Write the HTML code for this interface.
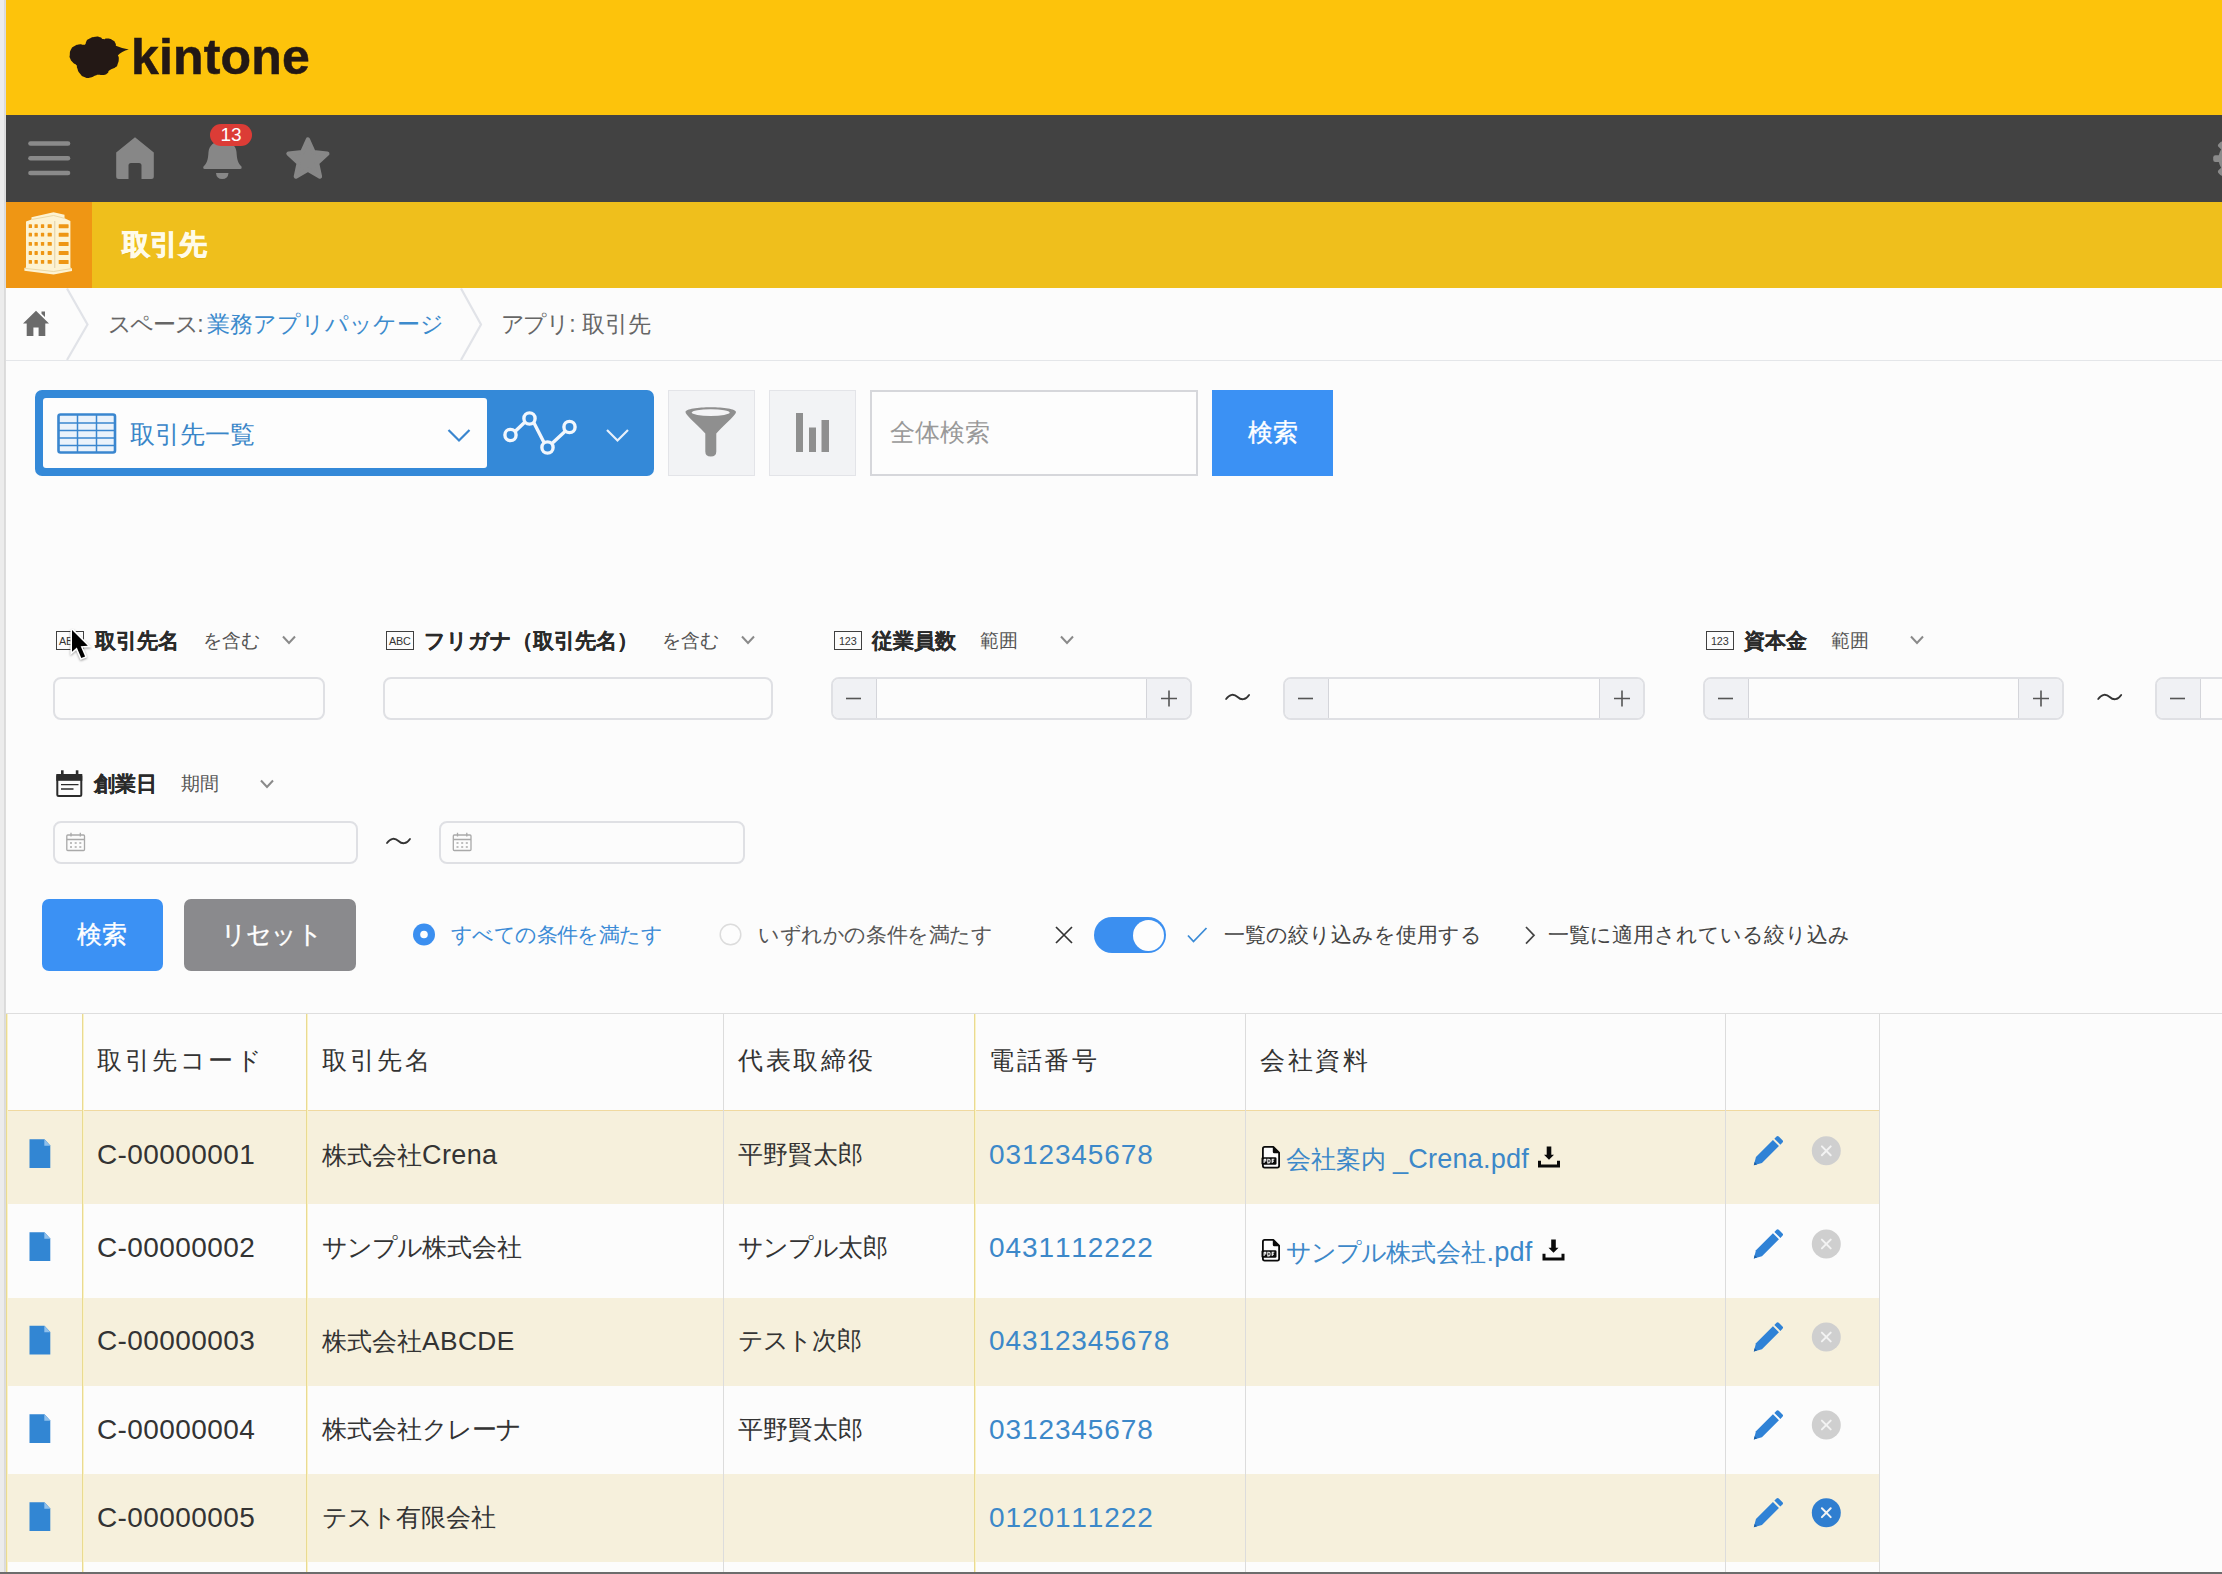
<!DOCTYPE html>
<html lang="ja">
<head>
<meta charset="utf-8">
<title>取引先 - kintone</title>
<style>
*{box-sizing:border-box;margin:0;padding:0}
html,body{width:2222px;height:1574px;overflow:hidden;background:#fcfcfc}
body{position:relative;font-family:"Liberation Sans",sans-serif;color:#333;font-size:28px}
.abs{position:absolute}
.t{position:absolute;white-space:nowrap;line-height:1}
/* window edge */
#edge{left:0;top:0;width:6px;height:1574px;background:linear-gradient(90deg,#ececec 0,#ececec 4px,#d9d9d9 4px,#dedede 6px)}
#hdr{left:6px;top:0;width:2216px;height:115px;background:#fdc30b}
#nav{left:6px;top:115px;width:2216px;height:87px;background:#424242}
#appbar{left:6px;top:202px;width:2216px;height:86px;background:#efbf1c}
#appicon{left:6px;top:202px;width:86px;height:86px;background:#ef9614}
#crumb{left:6px;top:288px;width:2216px;height:73px;background:#fcfcfc;border-bottom:1px solid #e4e6e9}
#bottomline{left:0;top:1572px;width:2222px;height:2px;background:#6c6c6c}

#logo{left:60px;top:25px}
#logotxt{left:131px;top:27.300px;font-size:50px;font-weight:bold;color:#231815;letter-spacing:0.150px;line-height:60px;-webkit-text-stroke:.55px #231815}
.navic{fill:#878787}
#badge{left:210px;top:124px;width:42px;height:22px;border-radius:11px;background:#dc3c36;color:#fff;font-size:19px;line-height:22px;text-align:center}
#apptitle{left:122px;top:228.500px;font-size:28px;font-weight:bold;color:#fffbe9;line-height:32px;letter-spacing:.3px;-webkit-text-stroke:.9px #fffbe9;text-shadow:0 1px 1px rgba(150,110,0,.2)}
.crumbtxt{top:310px;font-size:23px;line-height:28px;color:#666}
.crumbtxt a{color:#3d8bcd;text-decoration:none}

#viewsel{left:35px;top:390px;width:619px;height:86px;border-radius:7px;background:#3489d8}
#viewinner{left:43px;top:398px;width:444px;height:70px;border-radius:3px;background:#fdfdfd}
#viewtxt{left:130px;top:418px;font-size:25px;line-height:32px;color:#3a86c8}
.tbtn{top:390px;width:87px;height:86px;background:#f2f3f5;border:1px solid #e3e4e8}
#gsearch{left:870px;top:390px;width:328px;height:86px;background:#fdfdfd;border:2px solid #d6d7db}
#gsearchtxt{left:890px;top:417px;font-size:24.8px;line-height:32px;color:#999}
#gbtn{left:1212px;top:390px;width:121px;height:86px;background:#3b91f4}
#gbtntxt{left:1248px;top:417px;font-size:24.6px;line-height:32px;color:#fff;-webkit-text-stroke:.35px #fff}

.inp{background:#fcfcfc;border:2px solid #dfe0e4;border-radius:8px;height:43px}
.lbl{font-size:21.2px;font-weight:bold;color:#2a2a2a;line-height:28px;-webkit-text-stroke:.15px #2a2a2a}
.op{font-size:19.4px;color:#555;line-height:28px}
.num{background:#fcfcfc;border:2px solid #dfe0e4;border-radius:8px;height:43px;overflow:hidden}
.num i{position:absolute;top:0;height:39px;width:44px;background:#f0f1f4;display:block}
.num i.m{left:0;border-right:1.500px solid #d4d5da}
.num i.p{right:0;border-left:1.500px solid #d4d5da}
.tilde{font-size:26px;color:#333;line-height:28px}
.ficon{position:absolute;border:1.700px solid #404040;width:27.500px;height:19px;font-size:10.800px;line-height:18.400px;text-align:center;color:#333;letter-spacing:-.2px;font-family:"Liberation Sans",sans-serif}

.btn{top:899px;height:72px;border-radius:7px}
.btntxt{top:918px;font-size:25px;line-height:32px;color:#fff;-webkit-text-stroke:.35px #fff}
.atxt{top:921px;font-size:21.3px;line-height:28px;color:#444}
#toggle{left:1094px;top:917px;width:72px;height:36px;border-radius:18px;background:#3b8ff0}
#knob{left:1133px;top:919.500px;width:31px;height:31px;border-radius:50%;background:#fdfdfd}
/* table */
#ttop{left:6px;top:1013px;width:2216px;height:1.300px;background:#dedede}
.row{left:6px;width:1873px}
.cream{background:#f6f0dc}
.vl{top:1014px;width:1.200px;height:558px}
.vy{width:2px !important;background:linear-gradient(90deg,#e9da92 0,#e9da92 1px,#fbf3c6 1px,#fbf3c6 2px)}
.vg{background:#dcdcdc}
.th{top:1045px;font-size:24.6px;letter-spacing:2.500px;line-height:32px;color:#333}
.td{font-size:24.8px;line-height:32px;color:#333}
.td i{font-style:normal;letter-spacing:-.9px}
.td b.f{font-size:27.100px;letter-spacing:.2px}
.td b,.lat{font-weight:normal;font-size:28px;letter-spacing:.4px;font-kerning:none;font-family:"Liberation Sans",sans-serif}
.lnk{color:#3c88c9}
</style>
</head>
<body>
<div id="edge" class="abs"></div>
<div id="hdr" class="abs"></div>
<div id="nav" class="abs"></div>
<div id="appbar" class="abs"></div>
<div id="appicon" class="abs"></div>
<div id="crumb" class="abs"></div>

<!-- header logo -->
<svg id="logo" class="abs" width="80" height="60" viewBox="60 25 80 60">
 <path fill="#231815" d="M69.8 54.7 C70.1 51.6 69.5 52.2 71.1 49.3 C72.7 46.4 71.9 47.5 74.6 45.9 C77.3 44.3 76.2 44.8 79.1 44.4 C82.0 44.0 81.2 44.9 83.3 44.8 C85.4 44.7 84.4 45.2 85.4 44.0 C86.4 42.8 85.3 42.9 86.4 41.3 C87.5 39.7 85.8 40.6 88.7 39.1 C91.6 37.6 91.4 37.4 95.2 36.8 C99.0 36.2 97.4 36.5 100.1 37.3 C102.8 38.1 100.7 38.7 103.2 39.1 C105.7 39.5 104.5 38.1 107.7 38.5 C110.9 38.9 110.1 38.6 112.7 40.2 C115.3 41.8 114.3 41.2 115.4 43.2 C116.5 45.2 115.4 43.9 116.1 46.3 C116.8 48.7 117.0 47.7 117.6 50.5 C118.2 53.3 117.4 52.0 117.8 54.7 C118.2 57.4 118.9 55.3 118.8 58.5 C118.7 61.7 118.7 61.3 117.6 64.2 C116.5 67.1 118.1 65.3 115.4 67.3 C112.7 69.3 112.2 68.4 109.6 70.3 C107.0 72.2 109.6 71.5 107.7 73.0 C105.8 74.5 107.1 74.3 103.9 74.9 C100.7 75.5 101.0 74.5 98.2 74.7 C95.4 74.9 98.0 74.7 95.5 75.6 C93.0 76.5 94.1 77.0 90.6 77.5 C87.1 78.0 88.5 78.6 84.9 77.2 C81.3 75.8 82.5 76.5 79.9 73.4 C77.3 70.3 78.3 70.7 77.2 68.0 C76.1 65.3 78.0 67.2 76.5 65.3 C75.0 63.4 74.8 64.6 72.7 62.3 C70.6 60.0 71.2 61.0 70.2 58.5 C69.2 56.0 69.5 57.8 69.8 54.7 Z"/>
 <path fill="#231815" d="M115.800 45.800 Q122 48.500 128.800 49.500 Q121.500 51.200 117.300 56 Z"/>
</svg>
<div id="logotxt" class="t">kintone</div>
<!-- nav icons -->
<svg class="abs" style="left:20px;top:130px" width="330" height="60" viewBox="20 130 330 60">
 <g fill="none" stroke="#8a8a8a" stroke-width="4.6" stroke-linecap="round">
  <path d="M30.5 143.5H68"/><path d="M30.5 158.2H68"/><path d="M30.5 173H68"/>
 </g>
 <path class="navic" d="M135 137.2 L153.8 152.5 V176.5 Q153.8 179 151.3 179 H141.5 V165.5 Q141.5 163 139 163 H131 Q128.5 163 128.5 165.5 V179 H118.7 Q116.2 179 116.2 176.5 V152.5 Z"/>
 <path class="navic" d="M222 141 C213.500 141 209 146 208.500 152 C208 160 207 163 203.500 166.500 Q202.600 168.600 204.600 169 H240.400 Q242.400 168.600 241.500 166.500 C238 163 237 160 236.500 152 C236 146 231.500 141 222 141 Z"/>
 <path class="navic" d="M216 173 H228.500 Q228 179 222.200 179 Q216.500 179 216 173 Z"/>
 <path class="navic" d="M307.9 139.6 L313.5 152.2 L327.3 153.7 L317.0 163.0 L319.9 176.5 L307.9 169.6 L295.9 176.5 L298.8 163.0 L288.5 153.7 L302.3 152.2 Z" stroke="#878787" stroke-width="4.400" stroke-linejoin="round"/>
</svg>
<div id="badge" class="abs">13</div>
<svg class="abs" style="left:2202px;top:130px" width="20" height="60" viewBox="2202 130 20 60">
 <g fill="#8a8a8a"><circle cx="2235.500" cy="158.600" r="17"/>
 <rect x="2213.200" y="155.200" width="9" height="6.800" rx="2.200"/>
 <rect x="2213.200" y="155.200" width="9" height="6.800" rx="2.200" transform="rotate(44 2235.500 158.600)"/>
 <rect x="2213.200" y="155.200" width="9" height="6.800" rx="2.200" transform="rotate(-44 2235.500 158.600)"/></g>
</svg>
<!-- app icon (building) -->
<svg class="abs" style="left:20px;top:208px" width="60" height="72" viewBox="20 208 60 72">
 <path fill="#fdf3d2" d="M26 221.500 L31.500 219.500 V217.200 L53.500 212.300 L64.500 214.800 V218.300 L70.400 221 V267.500 L72 268.500 V271 L53.600 274.400 L24.400 270.800 V268.300 L26 267.500 Z"/>
 <path d="M31.500 219.500 L53.600 215.500 L64.500 218.300 M24.400 268.300 L53.600 271.500 L72 268.500" fill="none" stroke="#ecd9a6" stroke-width="1"/>
 <rect x="54.200" y="221" width="1.100" height="47" fill="#e3d3ad"/>
 <g fill="#ee9614"><rect x="28.7" y="224.2" width="3.3" height="3.800" rx=".6"/><rect x="34.5" y="224.2" width="3.3" height="3.800" rx=".6"/><rect x="40.9" y="224.2" width="3.3" height="3.800" rx=".6"/><rect x="47.6" y="224.2" width="4.2" height="3.800" rx=".6"/><rect x="58.700" y="224.2" width="9.900" height="4" rx=".6"/><rect x="28.7" y="232.8" width="3.3" height="3.800" rx=".6"/><rect x="34.5" y="232.8" width="3.3" height="3.800" rx=".6"/><rect x="40.9" y="232.8" width="3.3" height="3.800" rx=".6"/><rect x="47.6" y="232.8" width="4.2" height="3.800" rx=".6"/><rect x="58.700" y="232.8" width="9.900" height="4" rx=".6"/><rect x="28.7" y="242.0" width="3.3" height="3.800" rx=".6"/><rect x="34.5" y="242.0" width="3.3" height="3.800" rx=".6"/><rect x="40.9" y="242.0" width="3.3" height="3.800" rx=".6"/><rect x="47.6" y="242.0" width="4.2" height="3.800" rx=".6"/><rect x="58.700" y="242.0" width="9.900" height="4" rx=".6"/><rect x="28.7" y="251.1" width="3.3" height="3.800" rx=".6"/><rect x="34.5" y="251.1" width="3.3" height="3.800" rx=".6"/><rect x="40.9" y="251.1" width="3.3" height="3.800" rx=".6"/><rect x="47.6" y="251.1" width="4.2" height="3.800" rx=".6"/><rect x="58.700" y="251.1" width="9.900" height="4" rx=".6"/><rect x="28.7" y="260.0" width="3.3" height="3.800" rx=".6"/><rect x="34.5" y="260.0" width="3.3" height="3.800" rx=".6"/><rect x="40.9" y="260.0" width="3.3" height="3.800" rx=".6"/><rect x="47.6" y="260.0" width="4.2" height="3.800" rx=".6"/><rect x="58.700" y="260.0" width="9.900" height="4" rx=".6"/></g>
</svg>
<div id="apptitle" class="t">取引先</div>
<!-- breadcrumb -->
<svg class="abs" style="left:6px;top:288px" width="700" height="73" viewBox="6 288 700 73">
 <path d="M36 310.8 L49 323.5 H45.3 V336 H38.6 V327.5 H33.4 V336 H26.7 V323.5 H23 Z M41.5 311.5 H45 V317 L41.5 313.7 Z" fill="#6b6b6b"/>
 <path d="M67 288.5 L87.5 324.5 L67 360" fill="none" stroke="#e1e3e8" stroke-width="2.2"/>
 <path d="M461 288.5 L481 324.5 L461 360" fill="none" stroke="#e1e3e8" stroke-width="2.2"/>
</svg>
<div class="t crumbtxt" id="c1" style="left:107.500px;letter-spacing:-1.300px">スペース:</div>
<div class="t crumbtxt" id="c2" style="left:207px"><a>業務アプリパッケージ</a></div>
<div class="t crumbtxt" id="c3" style="left:500.500px;letter-spacing:-1.100px">アプリ:</div>
<div class="t crumbtxt" id="c4" style="left:581.500px">取引先</div>

<div id="viewsel" class="abs"></div>
<div id="viewinner" class="abs"></div>
<svg class="abs" style="left:50px;top:405px" width="600" height="56" viewBox="50 405 600 56">
 <!-- table icon -->
 <rect x="58.5" y="414.5" width="56.5" height="38" rx="2" fill="#eaf2fb" stroke="#3a86cf" stroke-width="2.6"/>
 <g stroke="#3a86cf" stroke-width="1.5" fill="none">
  <path d="M58 423H115M58 430.5H115M58 438H115M58 445.500H115"/><path d="M77.500 415V452M96.500 415V452"/>
 </g>
 <path d="M448.500 430 L459 440.500 L469.500 430" fill="none" stroke="#3a86cf" stroke-width="2.2"/>
 <!-- graph icon -->
 <g fill="none" stroke="#f2f7fd" stroke-width="3.4">
  <path d="M515 431.500 L525.500 421.500 M533.500 422 L544 442.500 M552.500 443 L566 430.500"/>
  <circle cx="510.500" cy="435" r="5.6"/><circle cx="529.500" cy="418.500" r="5.6"/><circle cx="547.500" cy="447.500" r="5.6"/><circle cx="569.500" cy="427" r="5.6"/>
 </g>
 <path d="M607 430 L617.500 440.500 L628 430" fill="none" stroke="#e8f1fb" stroke-width="2.2"/>
</svg>
<div id="viewtxt" class="t">取引先一覧</div>
<div class="abs tbtn" style="left:668px"></div>
<div class="abs tbtn" style="left:769px"></div>
<svg class="abs" style="left:668px;top:390px" width="190" height="86" viewBox="668 390 190 86">
 <!-- funnel -->
 <path d="M685.500 412 C685.500 405.500 736 405.500 736 412 C736 415 728 421 716.300 433.500 V451.500 Q716.300 456.500 710.800 456.500 Q705.300 456.500 705.300 451.500 V433.500 C693.500 421 685.500 415 685.500 412 Z" fill="#8f8f8f"/>
 <ellipse cx="710.700" cy="412.600" rx="19" ry="3.300" fill="#f4f4f6"/>
 <!-- bars -->
 <rect x="796" y="413" width="7" height="39" fill="#8f8f8f"/><rect x="809" y="427.500" width="7" height="24.500" fill="#8f8f8f"/><rect x="821.500" y="420" width="7.500" height="32" fill="#8f8f8f"/>
</svg>
<div id="gsearch" class="abs"></div>
<div id="gsearchtxt" class="t">全体検索</div>
<div id="gbtn" class="abs"></div>
<div id="gbtntxt" class="t">検索</div>


<!-- filter row 1 -->
<div class="ficon" style="left:56px;top:631px">ABC</div>
<div class="t lbl" style="left:94.500px;top:626.500px">取引先名</div>
<div class="t op" style="left:203px;top:626px">を含む</div>
<div class="ficon" style="left:386px;top:631px">ABC</div>
<div class="t lbl" style="left:424px;top:626.500px">フリガナ（取引先名）</div>
<div class="t op" style="left:662px;top:626px">を含む</div>
<div class="ficon" style="left:834px;top:631px">123</div>
<div class="t lbl" style="left:872px;top:626.500px">従業員数</div>
<div class="t op" style="left:980px;top:626px">範囲</div>
<div class="ficon" style="left:1706px;top:631px">123</div>
<div class="t lbl" style="left:1744px;top:626.500px">資本金</div>
<div class="t op" style="left:1831px;top:626px">範囲</div>
<div class="abs inp" style="left:53px;top:677px;width:272px"></div>
<div class="abs inp" style="left:383px;top:677px;width:390px"></div>
<div class="abs num" style="left:831px;top:677px;width:361px"><i class="m"></i><i class="p"></i></div><div class="abs num" style="left:1283px;top:677px;width:362px"><i class="m"></i><i class="p"></i></div><div class="abs num" style="left:1703px;top:677px;width:361px"><i class="m"></i><i class="p"></i></div><div class="abs num" style="left:2155px;top:677px;width:361px"><i class="m"></i><i class="p"></i></div>
<!-- filter row 2 -->
<div class="t lbl" style="left:94px;top:769.500px">創業日</div>
<div class="t op" style="left:181px;top:769px">期間</div>
<div class="abs inp" style="left:53px;top:821px;width:305px"></div>
<div class="abs inp" style="left:439px;top:821px;width:306px"></div>
<svg class="abs" style="left:40px;top:610px" width="2182" height="260" viewBox="40 610 2182 260">
 <g fill="none" stroke="#8a8a8a" stroke-width="2">
  <path d="M283 636.500 L289 643 L295 636.500"/><path d="M742 636.500 L748 643 L754 636.500"/>
  <path d="M1061 636.500 L1067 643 L1073 636.500"/><path d="M1911 636.500 L1917 643 L1923 636.500"/>
  <path d="M261 780.500 L267 787 L273 780.500"/>
 </g>
 <!-- +/- -->
 <g stroke="#555" stroke-width="1.600" fill="none">
  <path d="M846 698.500H861"/><path d="M1161 698.500H1177M1169 690.500V706.500"/>
  <path d="M1298 698.500H1313"/><path d="M1614 698.500H1630M1622 690.500V706.500"/>
  <path d="M1718 698.500H1733"/><path d="M2033 698.500H2049M2041 690.500V706.500"/>
  <path d="M2170 698.500H2185"/>
 </g>
 <!-- calendar label icon -->
 <g>
  <rect x="57.300" y="775" width="24" height="21" rx="1.500" fill="#fcfcfc" stroke="#2b2b2b" stroke-width="2"/>
  <rect x="56.300" y="774" width="26" height="6.800" fill="#2b2b2b"/>
  <rect x="61" y="770.300" width="2.600" height="6" fill="#2b2b2b"/><rect x="75.800" y="770.300" width="2.600" height="6" fill="#2b2b2b"/>
  <path d="M61 784.600H78.500M61 789H73.500" stroke="#2b2b2b" stroke-width="1.400"/>
 </g>
 <!-- small calendar icons -->
 <g id="scal" fill="none" stroke="#a9a9a9" stroke-width="1.300">
  <rect x="66.800" y="835" width="17.700" height="15.500" rx="1"/><path d="M66.800 839.500H84.500M71 832.800V836.500M80.300 832.800V836.500"/>
  <path d="M70 843H72M74.700 843H76.700M79.300 843H81.300M70 847H72M74.700 847H76.700M79.300 847H81.300" stroke-width="1.500"/>
 </g>
 <use href="#scal" x="386.500"/>
 <!-- tildes -->
 <path d="M1226.1 699.0 c3.5 -5.300 8 -5.300 11.5 -2 c3.500 3.300 8 3.300 11.500 -2" fill="none" stroke="#333" stroke-width="1.800" stroke-linecap="round"/><path d="M2098.2 699.0 c3.5 -5.300 8 -5.300 11.5 -2 c3.500 3.300 8 3.300 11.500 -2" fill="none" stroke="#333" stroke-width="1.800" stroke-linecap="round"/><path d="M387.0 843.0 c3.5 -5.300 8 -5.300 11.5 -2 c3.500 3.300 8 3.300 11.500 -2" fill="none" stroke="#333" stroke-width="1.800" stroke-linecap="round"/>
 <!-- mouse cursor -->
 <g style="filter:drop-shadow(0.5px 1.5px 1.3px rgba(0,0,0,.38))"><path d="M72 629.900 L72 651.800 L76.800 647.600 L81.300 658 L85.100 656.400 L80.700 646.200 L87.800 645.800 Z" fill="#fff" stroke="#fff" stroke-width="3.200" stroke-linejoin="miter" stroke-miterlimit="2.500"/><path d="M72 629.900 L72 651.800 L76.800 647.600 L81.300 658 L85.100 656.400 L80.700 646.200 L87.800 645.800 Z" fill="#000"/></g>
</svg>


<div class="abs btn" style="left:42px;width:121px;background:#3b91f4"></div>
<div class="t btntxt" style="left:77px">検索</div>
<div class="abs btn" style="left:184px;width:172px;background:#8a8a8d"></div>
<div class="t btntxt" style="left:221px;letter-spacing:-.8px">リセット</div>
<div class="t atxt" style="left:451px;color:#3b8bd6;letter-spacing:-.6px">すべての条件を満たす</div>
<div class="t atxt" style="left:758px;color:#555;letter-spacing:-.4px">いずれかの条件を満たす</div>
<div id="toggle" class="abs"></div><div id="knob" class="abs"></div>
<div class="t atxt" style="left:1224px">一覧の絞り込みを使用する</div>
<div class="t atxt" style="left:1548px">一覧に適用されている絞り込み</div>
<svg class="abs" style="left:400px;top:910px" width="1200" height="50" viewBox="400 910 1200 50">
 <circle cx="424" cy="934.500" r="11" fill="#3b8ff0"/><circle cx="424" cy="934.500" r="3.800" fill="#fdfdfd"/>
 <circle cx="730.500" cy="934.500" r="10.300" fill="#fdfdfd" stroke="#dcdcdc" stroke-width="1.500"/>
 <path d="M1056 927 L1072 943 M1072 927 L1056 943" stroke="#333" stroke-width="1.700" fill="none"/>
 <path d="M1188 935.500 L1193.500 941.500 L1206.500 928" stroke="#3b8bd6" stroke-width="1.800" fill="none"/>
 <path d="M1526 927 L1534 935.300 L1526 943.600" stroke="#444" stroke-width="1.700" fill="none"/>
</svg>

<div id="ttop" class="abs"></div>
<div class="abs" style="left:6px;top:1014.500px;width:1873px;height:96px;background:#fcfcfc"></div>
<div class="abs row cream" style="top:1110px;height:94px"></div>
<div class="abs row cream" style="top:1298px;height:88px"></div>
<div class="abs row cream" style="top:1474px;height:88px"></div>
<div class="abs" style="left:6px;top:1109.500px;width:1873px;height:1.500px;background:#f0d9a0"></div>
<div class="abs vl vy" style="left:6px"></div>
<div class="abs vl vy" style="left:82px"></div>
<div class="abs vl vy" style="left:306px"></div>
<div class="abs vl vg" style="left:723px"></div>
<div class="abs vl vy" style="left:974px"></div>
<div class="abs vl vg" style="left:1245px"></div>
<div class="abs vl vg" style="left:1725px"></div>
<div class="abs vl vg" style="left:1878.5px"></div>
<div class="t th" style="left:97px">取引先コード</div>
<div class="t th" style="left:322px">取引先名</div>
<div class="t th" style="left:738px">代表取締役</div>
<div class="t th" style="left:989px">電話番号</div>
<div class="t th" style="left:1260px">会社資料</div>
<div class="t td" style="left:97px;top:1138.5px"><b>C-00000001</b></div><div class="t td" style="left:322px;top:1138.5px">株式会社<b style="font-size:27px">Crena</b></div><div class="t td" style="left:738px;top:1138.5px">平野賢太郎</div><div class="t td lnk" style="left:989px;top:1138.5px"><b style="letter-spacing:.9px">0312345678</b></div><div class="t td lnk" style="left:1286px;top:1142.5px">会社案内 <b class="f">_Crena.pdf</b></div>
<div class="t td" style="left:97px;top:1231.5px"><b>C-00000002</b></div><div class="t td" style="left:322px;top:1231.5px"><i>サンプル</i>株式会社</div><div class="t td" style="left:738px;top:1231.5px"><i>サンプル</i>太郎</div><div class="t td lnk" style="left:989px;top:1231.5px"><b style="letter-spacing:.9px">0431112222</b></div><div class="t td lnk" style="left:1286px;top:1235.5px"><i>サンプル</i>株式会社<b class="f">.pdf</b></div>
<div class="t td" style="left:97px;top:1325px"><b>C-00000003</b></div><div class="t td" style="left:322px;top:1325px">株式会社<b style="font-size:26.300px">ABCDE</b></div><div class="t td" style="left:738px;top:1325px"><i style="letter-spacing:-1.300px">テスト</i>次郎</div><div class="t td lnk" style="left:989px;top:1325px"><b style="letter-spacing:.9px">04312345678</b></div>
<div class="t td" style="left:97px;top:1413.5px"><b>C-00000004</b></div><div class="t td" style="left:322px;top:1413.5px">株式会社<i>クレーナ</i></div><div class="t td" style="left:738px;top:1413.5px">平野賢太郎</div><div class="t td lnk" style="left:989px;top:1413.5px"><b style="letter-spacing:.9px">0312345678</b></div>
<div class="t td" style="left:97px;top:1501.5px"><b>C-00000005</b></div><div class="t td" style="left:322px;top:1501.5px"><i style="letter-spacing:-1.500px">テスト</i>有限会社</div><div class="t td lnk" style="left:989px;top:1501.5px"><b style="letter-spacing:.9px">0120111222</b></div>
<svg class="abs" style="left:6px;top:1110px" width="1880" height="464" viewBox="6 1110 1880 464">
<defs><g id="fi"><path d="M0 -0.700H15L20.800 5.500V28H0Z" fill="#3286d3"/><path d="M14.800 -0.700V5.700H20.800Z" fill="#8fc0ec"/></g><g id="pen" transform="translate(0.8 1) scale(0.935)"><path d="M0 31.500 L2.300 22.800 L20.500 4.600 L26.900 11 L8.700 29.200 Z" fill="#2f82d6"/><path d="M22 3.100 L24.300 0.800 Q25.500 -0.400 26.700 0.800 L30.700 4.800 Q31.900 6 30.700 7.200 L28.400 9.500 Z" fill="#2f82d6"/><path d="M0 31.500 L0.900 28 L3.500 30.600 Z" fill="#1d5da0"/></g><g id="del"><circle r="14.500" /><path d="M-4.400 -4.400L4.400 4.400M4.400 -4.400L-4.400 4.400" stroke="#f3f3f3" stroke-width="2" stroke-linecap="round"/></g><g id="pdf"><path d="M3.200 0.900H11.800L17.600 6.700V19.800Q17.600 21.600 15.800 21.600H3.200Q1.400 21.600 1.400 19.800V2.700Q1.400 0.900 3.200 0.900Z" fill="#fdfdfd" stroke="#0a0a0a" stroke-width="1.800" stroke-linejoin="round"/><path d="M11.300 0.900L17.600 7.200H12.800Q11.300 7.200 11.300 5.700Z" fill="#0a0a0a"/><rect x="0" y="11.200" width="15" height="7.600" rx="1.300" fill="#0a0a0a"/><path d="M2.600 13.200V17M2.600 13.400H4.300V15H2.600M6.300 13.300V16.900H7.700Q8.600 16.900 8.600 15.100Q8.600 13.300 7.700 13.300ZM10.700 17V13.300H12.800M10.700 15.100H12.400" fill="none" stroke="#f4f4f4" stroke-width="1.100"/></g><g id="dl"><path d="M8.700 0H13.300V8.300H16L11 13.200L6 8.300H8.700Z" fill="#0a0a0a"/><path d="M1.500 14.200V19.500H20.500V14.200" fill="none" stroke="#0a0a0a" stroke-width="3"/></g></defs>
<use href="#fi" x="29.500" y="1140.0"/><use href="#pen" x="1753" y="1134.8"/><use href="#del" x="1826.300" y="1150.8" fill="#cfcfcf"/>
<use href="#fi" x="29.500" y="1233.0"/><use href="#pen" x="1753" y="1228"/><use href="#del" x="1826.300" y="1244" fill="#cfcfcf"/>
<use href="#fi" x="29.500" y="1326.5"/><use href="#pen" x="1753" y="1321"/><use href="#del" x="1826.300" y="1337" fill="#cfcfcf"/>
<use href="#fi" x="29.500" y="1415.0"/><use href="#pen" x="1753" y="1409"/><use href="#del" x="1826.300" y="1425" fill="#cfcfcf"/>
<use href="#fi" x="29.500" y="1503.0"/><use href="#pen" x="1753" y="1496.7"/><use href="#del" x="1826.300" y="1512.7" fill="#2f7ed0"/>
<use href="#pdf" x="1261.500" y="1146"/><use href="#dl" x="1538" y="1146.500"/><use href="#pdf" x="1261.500" y="1239"/><use href="#dl" x="1542.500" y="1239.500"/></svg>

<div id="bottomline" class="abs"></div>
</body>
</html>
